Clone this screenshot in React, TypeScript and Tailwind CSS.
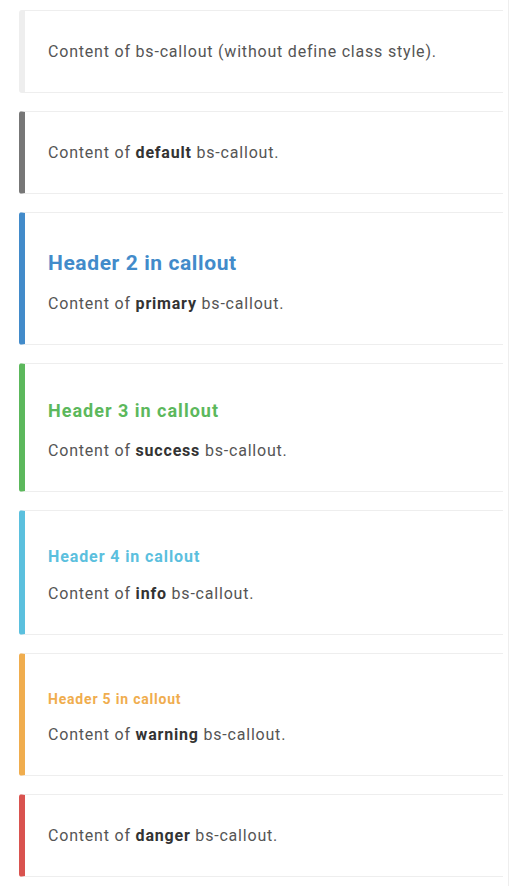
const callouts = [
  { border: "border-l-[#eeeeee]", word: null, header: null },
  { border: "border-l-[#777777]", word: "default", header: null },
  {
    border: "border-l-[#428bca]",
    word: "primary",
    header: (
      <h2 className="mt-[10px] mb-[17px] text-[21px] leading-[23px] font-bold tracking-[0.6px] text-[#428bca]">
        Header 2 in callout
      </h2>
    ),
  },
  {
    border: "border-l-[#5cb85c]",
    word: "success",
    header: (
      <h3 className="mt-[8px] mb-[18px] text-[18px] leading-[20px] font-bold tracking-[1px] text-[#5cb85c]">
        Header 3 in callout
      </h3>
    ),
  },
  {
    border: "border-l-[#5bc0de]",
    word: "info",
    header: (
      <h4 className="mt-[8px] mb-[16px] text-[16px] leading-[18px] font-bold tracking-[0.9px] text-[#5bc0de]">
        Header 4 in callout
      </h4>
    ),
  },
  {
    border: "border-l-[#f0ad4e]",
    word: "warning",
    header: (
      <h5 className="mt-[8px] mb-[16px] text-[14px] leading-[16px] font-bold tracking-[0.8px] text-[#f0ad4e]">
        Header 5 in callout
      </h5>
    ),
  },
  { border: "border-l-[#d9534f]", word: "danger", header: null },
];

export default function App() {
  return (
    <div className="flex min-h-[886px] bg-white font-['Roboto',sans-serif] text-[16px] text-[#555555]">
      <div className="flex w-[508px] flex-col gap-[18px] pt-[10px] pl-[19px] pr-[5px]">
        {callouts.map((c, i) => (
          <div
            key={i}
            className={`rounded-l-[3px] border border-r-0 border-[#eeeeee] border-l-[6px] px-[23px] pt-[29px] pb-[28px] ${c.border}`}
          >
            {c.header}
            <p className="leading-[24px] tracking-[0.8px]">
              {c.word ? (
                <>
                  Content of <b className="font-bold text-[#333333]">{c.word}</b> bs-callout.
                </>
              ) : (
                "Content of bs-callout (without define class style)."
              )}
            </p>
          </div>
        ))}
      </div>
      <div className="w-px bg-[#eeeeee]" />
    </div>
  );
}
